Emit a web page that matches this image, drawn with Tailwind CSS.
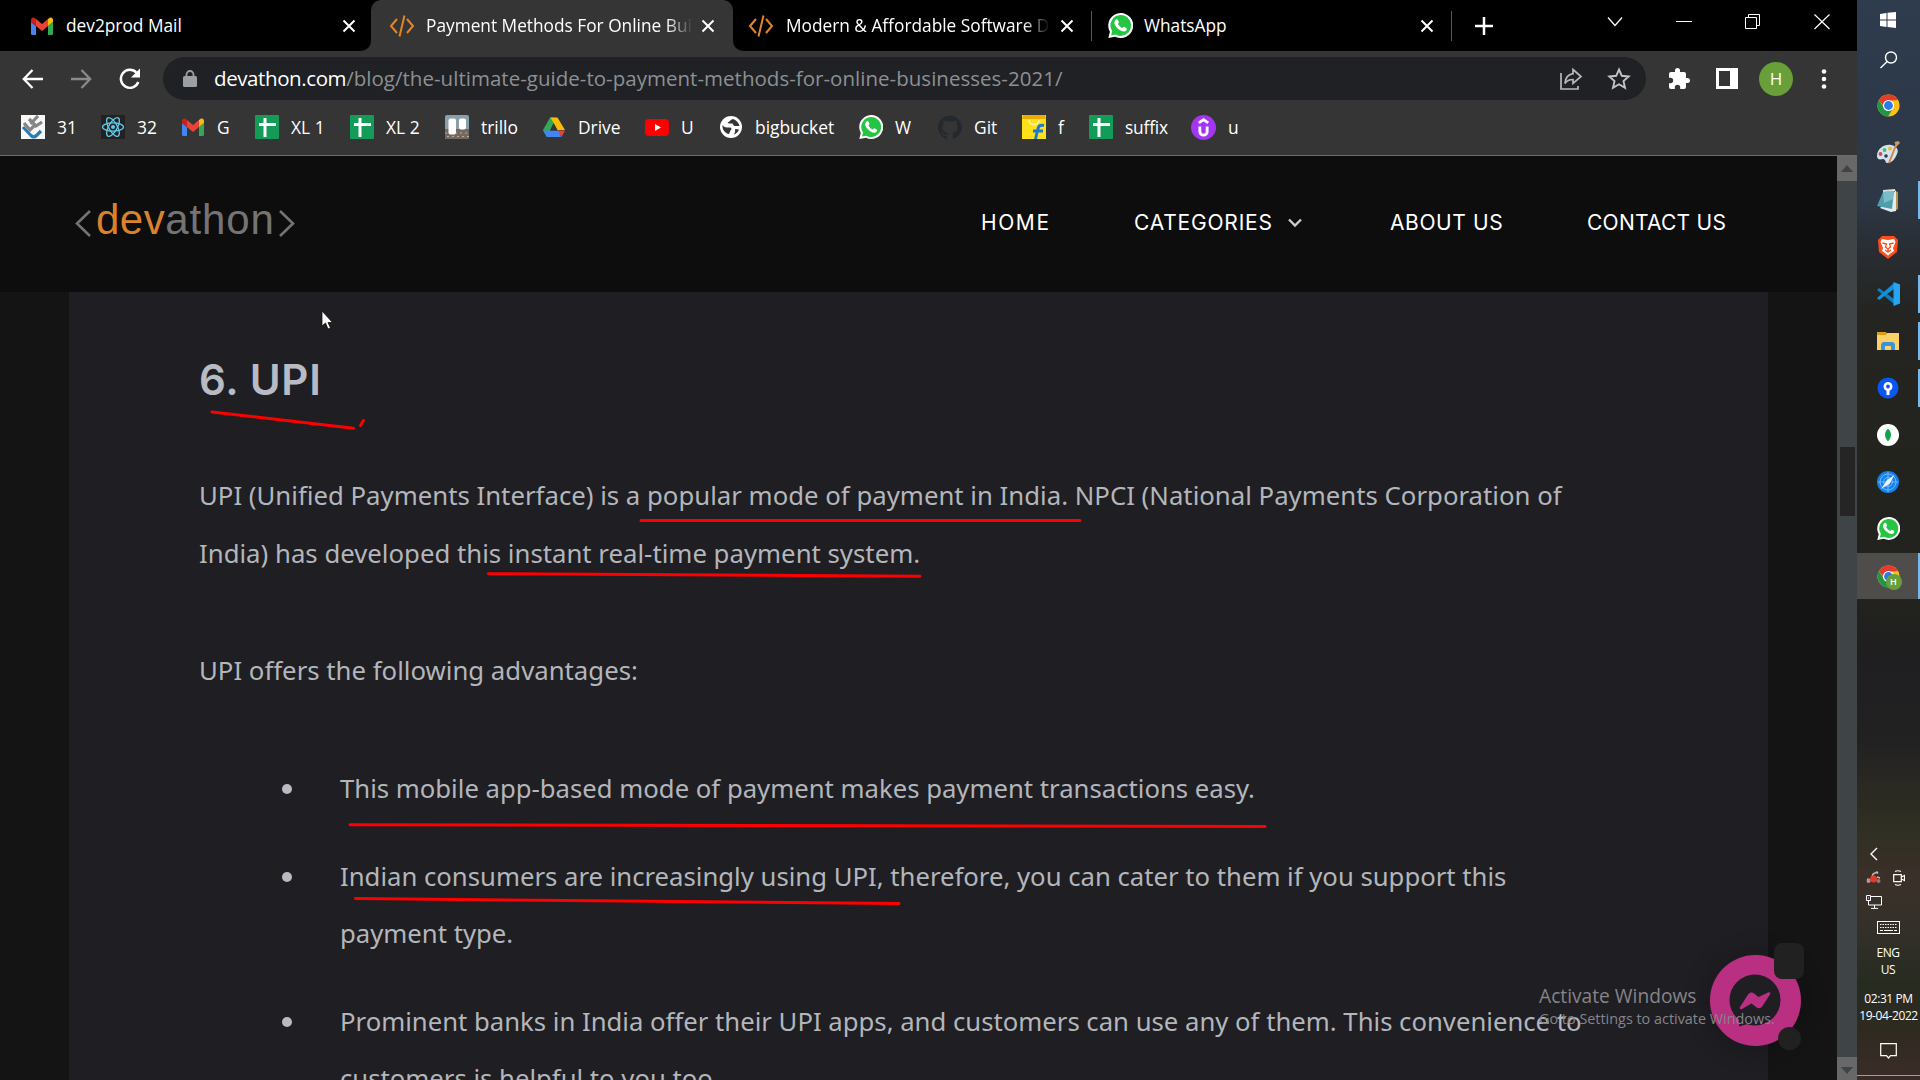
<!DOCTYPE html>
<html lang="en">
<head>
<meta charset="utf-8">
<title>Payment Methods For Online Businesses</title>
<script src="https://cdn.jsdelivr.net/npm/@tailwindcss/browser@4"></script>
</head>
<body class="w-[1920px] h-[1080px] overflow-hidden bg-black font-['Open_Sans',sans-serif] text-white">
<svg class="hidden">
  <symbol id="gmail" viewBox="0 0 24 24"><path fill="#4285f4" d="M1 8l5 4v9H2.500a1.500 1.500 0 0 1-1.500-1.500z"/><path fill="#34a853" d="M23 8l-5 4v9h3.500a1.500 1.500 0 0 0 1.500-1.500z"/><path fill="#ea4335" d="M6 5l6 5 6-5v7l-6 5-6-5z"/><path fill="#c5221f" d="M1 6c0-3 3-3.500 5-1v7L1 8z"/><path fill="#fbbc04" d="M23 6c0-3-3-3.500-5-1v7l5-4z"/></symbol>
  <symbol id="code" viewBox="0 0 26 24"><path d="M8 5L2 12l6 7M18 5l6 7-6 7M15.500 1.500L10.500 22.500" fill="none" stroke="#e58525" stroke-width="2"/></symbol>
  <symbol id="wa" viewBox="0 0 24 24"><path fill="#fff" d="M12 0a12 12 0 1 1-5 22.800L.3 24l1.500-6A12 12 0 0 1 12 0z"/><path fill="#25c443" d="M12 2a10 10 0 1 1-4.800 18.700L3 21.500l1-4A10 10 0 0 1 12 2z"/><path fill="#fff" d="M8.300 6c.7-.2 1 0 1.200.6l.9 2c.2.500-.2 1-.9 1.800 1 2 2.500 3.300 4.400 4.100.8-1 1.200-1.400 1.600-1.200l2.200 1.100c.6.300.3 1.600-.2 2.300-1.200 1.400-3.300 1.100-5.500 0-3-1.500-5.400-4.500-5.800-6.700-.2-1.800.8-3.500 2.100-4z"/></symbol>
  <symbol id="sheet" viewBox="0 0 24 24"><rect width="24" height="24" rx="1" fill="#129c58"/><path d="M10 3v19M4 9.500h17" stroke="#fff" stroke-width="3"/></symbol>
  <symbol id="chrome" viewBox="0 0 24 24"><circle cx="12" cy="12" r="11.500" fill="#fbc116"/><path fill="#e33b2e" d="M2 6.300A11.500 11.500 0 0 1 22 6.300L12 7 9 15z"/><path fill="#249447" d="M2 6.300A11.500 11.500 0 0 0 11.500 23.500L17 14.500 12 17l-5-3z"/><circle cx="12" cy="12" r="5.800" fill="#fff"/><circle cx="12" cy="12" r="4.600" fill="#2b7ae9"/></symbol>
  <symbol id="close" viewBox="0 0 14 14"><path d="M1.500 1.500l11 11M12.500 1.500l-11 11" stroke="#fff" stroke-width="2"/></symbol>
</svg>

<div class="flex h-full">
 <div class="w-[1857px] h-full flex flex-col relative">
  <!-- Tab strip -->
  <div class="h-[51px] shrink-0 bg-black flex text-[17.300px]">
   <div class="w-[371px] shrink-0 bg-[#353535]"><div class="h-full bg-black rounded-br-[10px] flex items-center pl-[30px] pr-[15px]">
     <svg class="size-6 shrink-0"><use href="#gmail"/></svg>
     <span class="ml-3 whitespace-nowrap">dev2prod Mail</span>
     <svg class="size-3.5 ml-auto"><use href="#close"/></svg></div>
   </div>
   <div class="w-[362px] shrink-0 bg-black"><div class="h-full rounded-t-[10px] bg-[#353535] flex items-center pl-[18px] pr-[18px]">
     <svg class="w-[26px] h-6 shrink-0"><use href="#code"/></svg>
     <span class="ml-[11px] w-[267px] overflow-hidden whitespace-nowrap [mask-image:linear-gradient(to_right,black_90%,transparent)]">Payment Methods For Online Bui</span>
     <svg class="size-3.5 ml-auto"><use href="#close"/></svg></div>
   </div>
   <div class="w-[358px] shrink-0 bg-[#353535]"><div class="h-full bg-black rounded-bl-[10px] flex items-center pl-[15px] pr-[17px]">
     <svg class="w-[26px] h-6 shrink-0"><use href="#code"/></svg>
     <span class="ml-3 w-[264px] overflow-hidden whitespace-nowrap [mask-image:linear-gradient(to_right,black_90%,transparent)]">Modern &amp; Affordable Software D</span>
     <svg class="size-3.5 ml-auto"><use href="#close"/></svg></div>
   </div>
   <div class="w-[360px] shrink-0 flex items-center pr-[17px]">
     <div class="w-px h-[30px] bg-[#555]"></div>
     <svg class="size-[25px] ml-4 shrink-0"><use href="#wa"/></svg>
     <span class="ml-[11px] whitespace-nowrap">WhatsApp</span>
     <svg class="size-3.5 ml-auto"><use href="#close"/></svg>
   </div>
   <div class="flex-1 flex items-center">
     <div class="w-px h-[30px] bg-[#555]"></div>
     <svg class="size-[18px] ml-[23px]" viewBox="0 0 18 18"><path d="M9 0v18M0 9h18" stroke="#fff" stroke-width="2.500"/></svg>
     <div class="ml-auto h-full flex items-start pt-3 pr-[27px] gap-[53px]">
       <svg class="w-4 h-5" viewBox="0 0 16 20"><path d="M1 5.500l7 8 7-8" fill="none" stroke="#fff" stroke-width="1.200"/></svg>
       <svg class="w-4 h-5" viewBox="0 0 16 20"><path d="M0 9.500h16" stroke="#fff"/></svg>
       <svg class="w-4 h-5" viewBox="0 0 16 20"><path d="M.5 5.500h11v11H.5zM3.500 5V2.500h11v11H12" fill="none" stroke="#fff"/></svg>
       <svg class="w-4 h-5" viewBox="0 0 16 20"><path d="M.5 2.500l15 14.500M15.500 2.500L.5 17" stroke="#fff" stroke-width="1.200"/></svg>
     </div>
   </div>
  </div>
  <!-- Toolbar -->
  <div class="h-[55px] shrink-0 bg-[#353535] flex items-center pl-[21px]">
    <svg class="size-6" viewBox="0 0 24 24"><path d="M22 12H3M11.500 3L2.800 12l8.700 9" fill="none" stroke="#fff" stroke-width="2.300"/></svg>
    <svg class="size-6 ml-6" viewBox="0 0 24 24"><path d="M2 12h19M12.500 3l8.700 9-8.700 9" fill="none" stroke="#8a8a8a" stroke-width="2.300"/></svg>
    <svg class="size-6 ml-[25px]" viewBox="0 0 24 24"><path d="M20.300 15A9 9 0 1 1 18.500 5.700" fill="none" stroke="#fff" stroke-width="2.400"/><path d="M22 1.500v9h-9z" fill="#fff"/></svg>
    <div class="ml-[21px] w-[1483px] h-[43px] rounded-full bg-[#202124] flex items-center pl-5 pr-[15px]">
      <svg class="w-[14px] h-[18px] shrink-0" viewBox="0 0 14 18"><rect y="6" width="14" height="11" rx="1.500" fill="#9aa0a6"/><path d="M3.500 7V4.500a3.500 3.500 0 0 1 7 0V7" fill="none" stroke="#9aa0a6" stroke-width="1.800"/></svg>
      <span class="ml-[17px] text-[20.500px] whitespace-nowrap text-[#8d9093] tracking-[0.02px]"><span class="text-white tracking-[-0.4px]">devathon.com</span>/blog/the-ultimate-guide-to-payment-methods-for-online-businesses-2021/</span>
      <svg class="size-6 ml-auto shrink-0" viewBox="0 0 24 24"><path d="M2 6v16h17v-3M14 2.500l8 7-8 7v-4c-4 0-6.500 1.500-8 4C6.300 11.500 9 7.500 14 6.700z" fill="none" stroke="#b9b9b9" stroke-width="1.700"/></svg>
      <svg class="size-6 ml-6 shrink-0" viewBox="0 0 24 24"><path d="M12 2.500l2.800 6.300 6.900.7-5.200 4.600 1.500 6.800-6-3.600-6 3.600 1.500-6.800-5.200-4.600 6.900-.7z" fill="none" stroke="#c4c4c4" stroke-width="1.900"/></svg>
    </div>
    <svg class="size-6 ml-[21px]" viewBox="0 0 24 24"><path fill="#fff" d="M20.500 11H19V7a2 2 0 0 0-2-2h-4V3.500a2.500 2.500 0 0 0-5 0V5H4a2 2 0 0 0-2 2v3.800h1.500a2.700 2.700 0 0 1 0 5.400H2V20a2 2 0 0 0 2 2h3.800v-1.500a2.700 2.700 0 0 1 5.400 0V22H17a2 2 0 0 0 2-2v-4h1.500a2.500 2.500 0 0 0 0-5z"/></svg>
    <svg class="w-[22px] h-[21px] ml-[25px]" viewBox="0 0 22 21"><path fill="#fff" fill-rule="evenodd" d="M0 0h22v21H0zM3 3v15h11V3z"/></svg>
    <div class="ml-[21px] size-[34px] rounded-full bg-[#689f38] flex items-center justify-center text-[17px]">H</div>
    <svg class="w-1.5 h-5 ml-7" viewBox="0 0 6 20"><g fill="#fff"><circle cx="3" cy="2.500" r="2.300"/><circle cx="3" cy="10" r="2.300"/><circle cx="3" cy="17.500" r="2.300"/></g></svg>
  </div>
  <!-- Bookmarks -->
  <div class="h-[50px] shrink-0 bg-[#353535] border-b border-[#6b6b6b] flex items-start pl-[21px] text-[17.400px] leading-6 pt-[9px]">
    <div class="w-[80px] flex gap-3"><svg class="size-6 shrink-0" viewBox="0 0 24 24"><rect width="24" height="24" fill="#f8f8f8"/><g fill="none" stroke-width="3.200"><path d="M2 12l8 8.500c2 2 4 1.500 5.500 0L20 16" stroke="#2b7cb5"/><path d="M3 8l6 7 6-6M8 4l7 7 6-4M17 1L9.500 9" stroke="#858585"/></g></svg><span>31</span></div>
    <div class="w-[80px] flex gap-3"><svg class="size-6 shrink-0" viewBox="0 0 24 24"><rect width="24" height="24" fill="#222"/><g fill="none" stroke="#61c8e8" stroke-width="1.300"><ellipse cx="12" cy="12" rx="10.500" ry="4.200"/><ellipse cx="12" cy="12" rx="10.500" ry="4.200" transform="rotate(60 12 12)"/><ellipse cx="12" cy="12" rx="10.500" ry="4.200" transform="rotate(120 12 12)"/></g><circle cx="12" cy="12" r="2" fill="#61c8e8"/></svg><span>32</span></div>
    <div class="w-[74px] flex gap-3"><svg class="size-6 shrink-0"><use href="#gmail"/></svg><span>G</span></div>
    <div class="w-[95px] flex gap-3"><svg class="size-6 shrink-0"><use href="#sheet"/></svg><span>XL 1</span></div>
    <div class="w-[95px] flex gap-3"><svg class="size-6 shrink-0"><use href="#sheet"/></svg><span>XL 2</span></div>
    <div class="w-[97px] flex gap-3"><svg class="size-6 shrink-0" viewBox="0 0 24 24"><rect width="24" height="24" rx="2" fill="#8aa0a8"/><path fill="#75695f" d="M0 14h24v10H0z"/><path stroke="#b9aca0" stroke-dasharray="2 3" d="M0 18h24M2 21.500h22"/><rect x="3.500" y="3.500" width="7.500" height="16" rx="2" fill="#fff"/><rect x="14" y="3.500" width="7" height="11" rx="2" fill="#fff"/></svg><span>trillo</span></div>
    <div class="w-[103px] flex gap-3"><svg class="size-6 shrink-0" viewBox="0 0 24 24"><path fill="#34a853" d="M8 2.500h4l1 2.500L4.800 22 1 15z"/><path fill="#fbbc04" d="M8.500 2.500h7L23 15h-7.500z"/><path fill="#4285f4" d="M1 15.500h16L19 22H5z"/><path fill="#ea4335" d="M16 15.500h7L19.500 22z"/><path fill="#353535" d="M12 9l3.500 6.500h-7z"/></svg><span>Drive</span></div>
    <div class="w-[74px] flex gap-3"><svg class="size-6 shrink-0" viewBox="0 0 24 24"><rect y="4" width="24" height="17" rx="4" fill="#f00"/><path fill="#fff" d="M10 9l6 3.500-6 3.500z"/></svg><span>U</span></div>
    <div class="w-[140px] flex gap-3"><svg class="size-6 shrink-0" viewBox="0 0 24 24"><circle cx="12" cy="12" r="11" fill="#fff"/><path fill="#353535" d="M3.500 10c1.500 2.500 4 2.500 7 2.500 2.500 0 2.500 2 1 3l-1.500 3.500C6 18.500 3 14.500 3.500 10zM14 4c-3 1-3 2.500-5.500 3.500 1.500 2 3.500.5 5 1 1 1 .5 2.500 3 2.500h4C19.500 7.500 17 5 14 4zM16 14l4 .5c-1 2.500-2.500 4-5 5 .5-1.500 1.500-2.500 1-5.500z"/></svg><span>bigbucket</span></div>
    <div class="w-[79px] flex gap-3"><svg class="size-6 shrink-0"><use href="#wa"/></svg><span>W</span></div>
    <div class="w-[84px] flex gap-3"><svg class="size-6 shrink-0" viewBox="0 0 24 24"><path fill="#24292e" d="M12 .5a12 12 0 0 0-3.800 23.400c.6.100.8-.3.800-.6v-2.200c-3.300.7-4-1.400-4-1.400-.6-1.400-1.400-1.800-1.400-1.800-1-.7.100-.7.100-.7 1.200.1 1.800 1.200 1.800 1.200 1.100 1.900 2.900 1.300 3.500 1 .1-.8.4-1.300.8-1.600-2.700-.3-5.500-1.300-5.500-5.900 0-1.300.5-2.400 1.200-3.200-.1-.4-.5-1.600.1-3.200 0 0 1-.3 3.300 1.200a11.500 11.500 0 0 1 6 0c2.300-1.500 3.300-1.200 3.300-1.200.7 1.600.2 2.800.1 3.200.8.800 1.200 1.900 1.200 3.200 0 4.600-2.800 5.600-5.500 5.900.4.400.8 1.100.8 2.200v3.300c0 .3.200.7.800.6A12 12 0 0 0 12 .5z"/></svg><span>Git</span></div>
    <div class="w-[67px] flex gap-3"><svg class="size-6 shrink-0" viewBox="0 0 24 24"><path fill="#ffe11b" d="M0 0h24v24H0z"/><path fill="#edac00" d="M1 0h22l1 4H0z"/><path d="M7 5c0 6 10 6 10 0" fill="none" stroke="#fff7b0" stroke-width="1.500"/><path d="M22 10.500c-5-1-5.500 1-6.500 5L13.500 24M11 16h10" fill="none" stroke="#1a79d4" stroke-width="3"/></svg><span>f</span></div>
    <div class="w-[102px] flex gap-3"><svg class="size-6 shrink-0"><use href="#sheet"/></svg><span class="tracking-[-0.200px]">suffix</span></div>
    <div class="flex gap-3"><svg class="size-[25px] shrink-0" viewBox="0 0 24 24"><circle cx="12" cy="12" r="12" fill="#a435f0"/><path d="M7.500 7.500l4.500-3 4.500 3M8.500 11v5c0 4.500 7 4.500 7 0v-5" fill="none" stroke="#fff" stroke-width="2.700"/></svg><span>u</span></div>
  </div>

  <div class="flex flex-1 min-h-0">
   <div class="w-[1837px] flex flex-col bg-[#141414]">
    <!-- Site header -->
    <div class="h-[136px] shrink-0 bg-[#0d0d0d] flex items-center pl-[75px] pr-[111px]">
      <div class="flex items-center font-['Liberation_Sans',sans-serif] text-[42px] leading-none text-[#747474] -mt-2">
        <svg class="w-4 h-[27px] mr-[5px] mt-1.5" viewBox="0 0 16 27"><path d="M15 1L2 13.500 15 26" fill="none" stroke="#747474" stroke-width="2.600"/></svg>
        <span class="text-[#d9822b] tracking-[0.500px] -mt-px">dev</span><span class="tracking-[0.900px] -mt-px">athon</span>
        <svg class="w-4 h-[27px] ml-1 mt-1.5" viewBox="0 0 16 27"><path d="M1 1l13 12.500L1 26" fill="none" stroke="#747474" stroke-width="2.600"/></svg>
      </div>
      <nav class="ml-auto flex items-center text-[21px] font-['Inter',sans-serif] whitespace-nowrap -mt-0.5">
        <span class="w-[153px] tracking-[1.600px]">HOME</span>
        <span class="w-[256px] flex items-center tracking-[0.800px]">CATEGORIES<svg class="w-3.5 h-3 ml-[15px]" viewBox="0 0 14 12"><path d="M1 2.500l6 6 6-6" fill="none" stroke="#ccc" stroke-width="2.400"/></svg></span>
        <span class="w-[197px] tracking-[0.600px]">ABOUT US</span>
        <span class="w-[139px] tracking-[0.250px]">CONTACT US</span>
      </nav>
    </div>
    <!-- Article -->
    <article class="ml-[69px] w-[1699px] flex-1 min-h-0 overflow-hidden bg-[#1f1e23] pl-[130px] pt-[58px] text-[25.750px] leading-[58px] text-[#b3b6ba] font-['Noto_Sans',sans-serif] whitespace-nowrap">
      <h2 class="font-['Inter',sans-serif] font-semibold text-[42px] leading-[60px] text-[#b8bbc4] tracking-[0.700px]">6. UPI</h2>
      <p class="mt-[56px]">UPI (Unified Payments Interface) is a popular mode of payment in India. NPCI (National Payments Corporation of<br>India) has developed this instant real-time payment system.</p>
      <p class="mt-[59px]">UPI offers the following advantages:</p>
      <ul class="mt-[61px] pl-[141px] leading-[57.500px] text-[25.700px]">
        <li class="mb-[30px] relative"><i class="absolute left-[-58.500px] top-[24px] size-[10px] rounded-full bg-[#b8bbc4]"></i>This mobile app-based mode of payment makes payment transactions easy.</li>
        <li class="mb-[30px] relative"><i class="absolute left-[-58.500px] top-[24px] size-[10px] rounded-full bg-[#b8bbc4]"></i>Indian consumers are increasingly using UPI, therefore, you can cater to them if you support this<br>payment type.</li>
        <li class="relative"><i class="absolute left-[-58.500px] top-[24px] size-[10px] rounded-full bg-[#b8bbc4]"></i>Prominent banks in India offer their UPI apps, and customers can use any of them. This convenience to<br>customers is helpful to you too.</li>
      </ul>
    </article>
   </div>
   <!-- Scrollbar -->
   <div class="w-5 bg-[#3f4446] flex flex-col items-center">
     <div class="h-[25px] w-full bg-[#686868] flex items-center justify-center"><svg class="w-3 h-[7px]" viewBox="0 0 12 7"><path d="M6 0l6 7H0z" fill="#3f4446"/></svg></div>
     <div class="mt-[266px] ml-px w-[15px] h-[69px] bg-[#252525]"></div>
     <div class="mt-auto h-[23px] w-full bg-[#686868] flex items-center justify-center"><svg class="w-3 h-[7px] mt-1" viewBox="0 0 12 7"><path d="M6 7l6-7H0z" fill="#3f4446"/></svg></div>
   </div>
  </div>

  <!-- Chat widget -->
  <div class="absolute left-[1709px] top-[954px] size-[92px] rounded-full shadow-[0_2px_20px_8px_rgba(0,0,0,0.150)]"><svg class="size-full" viewBox="0 0 92 92"><circle cx="46.500" cy="46.500" r="45.500" fill="#b92f82"/><circle cx="46" cy="46" r="25.500" fill="#1f1e23"/><path d="M30 60v11.500c0 1 1 1 1.500.6l7-2.100z" fill="#1f1e23"/><path fill="#b92f82" d="M31 53l8-12.500c2-2.800 4.500-2.500 6.500-.8l4 3.300 9.500-4.500c2-1 3 .5 2 2l-7.500 11.500c-2 2.800-4.500 2.700-6.500 1l-4.500-3.500-9.500 5.500c-1.500.8-3-.5-2-2z"/></svg></div>
  <div class="absolute left-[1774px] top-[943px] w-[30px] h-9 rounded-lg bg-[#212121]"></div>
  <div class="absolute left-[1778px] top-[1027px] size-[23px] rounded-full bg-[#212121]"></div>
  <!-- Activation watermark -->
  <div class="absolute left-[1539px] top-[983px] text-[#858589] whitespace-nowrap">
    <div class="text-[19.200px] leading-[26px]">Activate Windows</div>
    <div class="text-[14.400px] leading-5">Go to Settings to activate Windows.</div>
  </div>
  <!-- Pen strokes -->
  <svg class="absolute left-0 top-0 w-[1857px] h-[1080px] pointer-events-none"><g stroke="#f00" stroke-width="3" stroke-linecap="round"><path d="M212 412L353.500 428.300M360.500 425.500L363.500 420.500M641 520.500H1080M488.500 573.700L920 576.300M350 824.700L1265 826.500M355.500 898.500L899 903.500"/></g></svg>
  <svg class="absolute left-[321px] top-[310px] w-[13px] h-[20px]" viewBox="0 0 13 20"><path d="M1 1v15l3.500-3 2.500 6 2.500-1-2.500-5.500h4.500z" fill="#fff" stroke="#111" stroke-width=".8"/></svg>
 </div>

 <!-- Taskbar -->
 <div class="w-[63px] h-full relative bg-[linear-gradient(to_bottom,#2e3c4d_0px,#2d3949_120px,#2d3745_200px,#292d33_250px,#242522_310px,#23231e_480px,#22221e_600px,#1f1e20_660px,#222122_740px,#302f23_830px,#3b3029_880px,#33302a_930px,#262b20_985px,#2f2a20_1030px,#3a2c28_1080px)] flex flex-col items-center">
   <svg class="size-4 mt-3 mr-px shrink-0" viewBox="0 0 16 16"><path fill="#fff" d="M0 2l6.500-1v6.500H0zM7.500.8L16 0v7.500H7.500zM0 8.500h6.500V15L0 14zM7.500 8.500H16V16l-8.500-.9z"/></svg>
   <svg class="size-[18px] mt-[23px] shrink-0" viewBox="0 0 18 18"><circle cx="11" cy="6.500" r="5.500" fill="none" stroke="#fff" stroke-width="1.400"/><path d="M7.200 10.500L.5 17" stroke="#fff" stroke-width="1.400"/></svg>
   <div class="mt-[13px] w-full flex flex-col items-end pr-px">
     <div class="h-[47px] w-full flex justify-center items-center"><svg class="size-[23px]"><use href="#chrome"/></svg></div>
     <div class="h-[47px] w-full flex justify-center items-center"><svg class="size-6" viewBox="0 0 24 24"><path fill="#cfe3f1" d="M1 15C1 8 8 3 15 4c6 1 8 5 6 9-2 5-5 9-10 9-2 0-1-4-4-4-4 1-6 0-6-3z"/><circle cx="10" cy="15" r="1.800" fill="#2c3a49"/><circle cx="4.500" cy="13" r="1.900" fill="#d64a41"/><circle cx="8.500" cy="9" r="1.900" fill="#58b558"/><circle cx="14" cy="7.500" r="2" fill="#efb92f"/><path d="M20 4l-7 18" stroke="#d9873b" stroke-width="2"/><path d="M18.500 1l4-1 1.500 2-4 4z" fill="#c79a6e"/></svg></div>
     <div class="h-[47px] w-full flex justify-center items-center"><svg class="size-6" viewBox="0 0 24 24"><path fill="#b7924a" d="M19 3l3 1v17l-3 2z"/><path fill="#e4ebee" d="M20 2v21l-5 1L4 20z"/><path fill="#4d9fae" d="M7 4l11-1-2 18L1 18z"/><path fill="#8dcbd3" d="M7 4l11-1-1 8-9 4z" opacity=".7"/><path d="M7 3l12-1" stroke="#ddd" stroke-width="2"/></svg></div>
     <div class="h-[47px] w-full flex justify-center items-center"><svg class="size-6" viewBox="0 0 24 24"><path fill="#fb4c1c" d="M6 1h12l4 4-1 12-9 7-9-7L2 5z"/><path fill="#fff" d="M6 4l6 1 6-1 1.500 3-2.500 6 1 3-3 2-3 2.500L9 18l-3-2 1-3-2.500-6z"/><path stroke="#fb4c1c" stroke-width="1.300" fill="none" d="M6.500 8l4 1-1 3 2.500 2 2.500-2-1-3 4-1M12 14v3M9 15l3 2 3-2"/></svg></div>
     <div class="h-[47px] w-full flex justify-center items-center"><svg class="size-6" viewBox="0 0 24 24"><path fill="#0c7dc4" d="M1 8l2-2 15 11v5z"/><path fill="#148fd9" d="M1 16l2 2L18 7V1z"/><path fill="#27a5f2" d="M17.500 0L24 2.500v19L17.500 24z"/></svg></div>
     <div class="h-[47px] w-full flex justify-center items-center"><svg class="size-[22px]" viewBox="0 0 22 22"><path fill="#e19c12" d="M0 2h9l1 2v4H0z"/><path fill="#fcd167" d="M0 5h9l1-2h12v17H0z"/><path fill="#3c93d9" d="M4 20v-6l2-2h10l2 2v6h-4v-4H8v4z"/></svg></div>
     <div class="h-[47px] w-full flex justify-center items-center"><svg class="size-[22px]" viewBox="0 0 22 22"><circle cx="11" cy="11" r="10.500" fill="#0b56f0"/><circle cx="11" cy="9.500" r="3.200" fill="none" stroke="#fff" stroke-width="2.600"/><path d="M9.500 12v6h3v-6z" fill="#fff"/></svg></div>
     <div class="h-[47px] w-full flex justify-center items-center"><svg class="size-[22px]" viewBox="0 0 22 22"><circle cx="11" cy="11" r="11" fill="#fff"/><path d="M11 4.500c4 4 4 8.500 0 13-4-4.500-4-9 0-13z" fill="#14a34f"/></svg></div>
     <div class="h-[47px] w-full flex justify-center items-center"><svg class="size-[22px]" viewBox="0 0 22 22"><circle cx="11" cy="11" r="11" fill="#1481ec"/><g fill="none" stroke="#6fb6f7"><circle cx="11" cy="11" r="8"/><circle cx="11" cy="11" r="4.500"/><path d="M11 1v20M1 11h20"/></g><path d="M17.500 4l-5 9L4 18l6-9z" fill="#e9f4ff"/></svg></div>
     <div class="h-[47px] w-full flex justify-center items-center"><svg class="size-[23px]"><use href="#wa"/></svg></div>
     <div class="h-[46px] mt-px w-full flex justify-center items-center bg-[#4e4d4b]"><div class="relative"><svg class="size-[23px]"><use href="#chrome"/></svg><div class="absolute left-[9px] top-[9px] size-4 rounded-full bg-[#689f38] text-[9px] leading-4 text-center font-semibold">H</div></div></div>
   </div>
   <div class="absolute right-0 top-[181px] w-0.5 h-[38px] bg-[#76b9ed]"></div>
   <div class="absolute right-0 top-[275px] w-0.5 h-[38px] bg-[#76b9ed]"></div>
   <div class="absolute right-0 top-[322px] w-0.5 h-[38px] bg-[#76b9ed]"></div>
   <div class="absolute right-0 top-[369px] w-0.5 h-[38px] bg-[#76b9ed]"></div>
   <div class="absolute right-0 top-[553px] w-0.5 h-[46px] bg-[#76b9ed]"></div>

   <div class="mt-auto w-full flex flex-col items-center text-[12px] leading-[17px] tracking-[-0.400px]">
     <div class="w-full pl-[13px]"><svg class="w-2 h-3.5" viewBox="0 0 8 14"><path d="M7 1L1 7l6 6" fill="none" stroke="#fff" stroke-width="1.400"/></svg></div>
     <div class="w-full flex items-center pl-[9px] mt-[9px]"><svg class="w-[15px] h-4" viewBox="0 0 15 16"><path d="M6 7l1-3 4-2 1 1.500M1 9l4 1M11 7l3 1" stroke="#c4b8b4" stroke-width="1.500" fill="none"/><circle cx="2.500" cy="11" r="2" fill="#ab9a98"/><circle cx="12.500" cy="11" r="2" fill="#8a7a78"/><circle cx="7.500" cy="9" r="3.600" fill="#e03a30"/></svg>
      <svg class="w-3 h-4 ml-3" viewBox="0 0 12 16"><path d="M.7 4.700h7.600v7H.7zM8.500 7l3-1.500v5l-3-1.500M2 1.500q3-1.500 6 0M2 14.500q3 1.500 6 0" fill="none" stroke="#fff" stroke-width="1.200"/></svg></div>
     <div class="w-full pl-[9px] mt-[9px]"><svg class="w-4 h-[14px]" viewBox="0 0 16 14"><path d="M5 1.500h10.500v8.500H2.500V6M8.500 10v3M5 13.400h7M.5.500h4v5h-4zM2 3h1" fill="none" stroke="#fff"/></svg></div>
     <svg class="w-[23px] h-[13px] mt-3 mr-px" viewBox="0 0 23 13"><rect x=".5" y=".5" width="22" height="12" fill="none" stroke="#fff"/><path d="M3 3.500h17M3 6.500h17" stroke="#fff" stroke-dasharray="1.500 1"/><path d="M3 9.500h3M7 9.500h9M17 9.500h3" stroke="#fff"/></svg>
     <div class="mt-[10px] mr-px">ENG</div>
     <div class="mr-px">US</div>
     <div class="mt-[12px] whitespace-nowrap">02:31 PM</div>
     <div class="whitespace-nowrap">19-04-2022</div>
     <svg class="w-[17px] h-[17px] mt-[19px]" viewBox="0 0 17 17"><path d="M.7.700h15.600v12H10.500L8.500 15l-2-2.300H.7z" fill="none" stroke="#fff" stroke-width="1.200"/></svg>
     <div class="w-full h-px bg-[#a39d97] mt-[15px] mb-1"></div>
   </div>
 </div>
</div>
</body>
</html>
